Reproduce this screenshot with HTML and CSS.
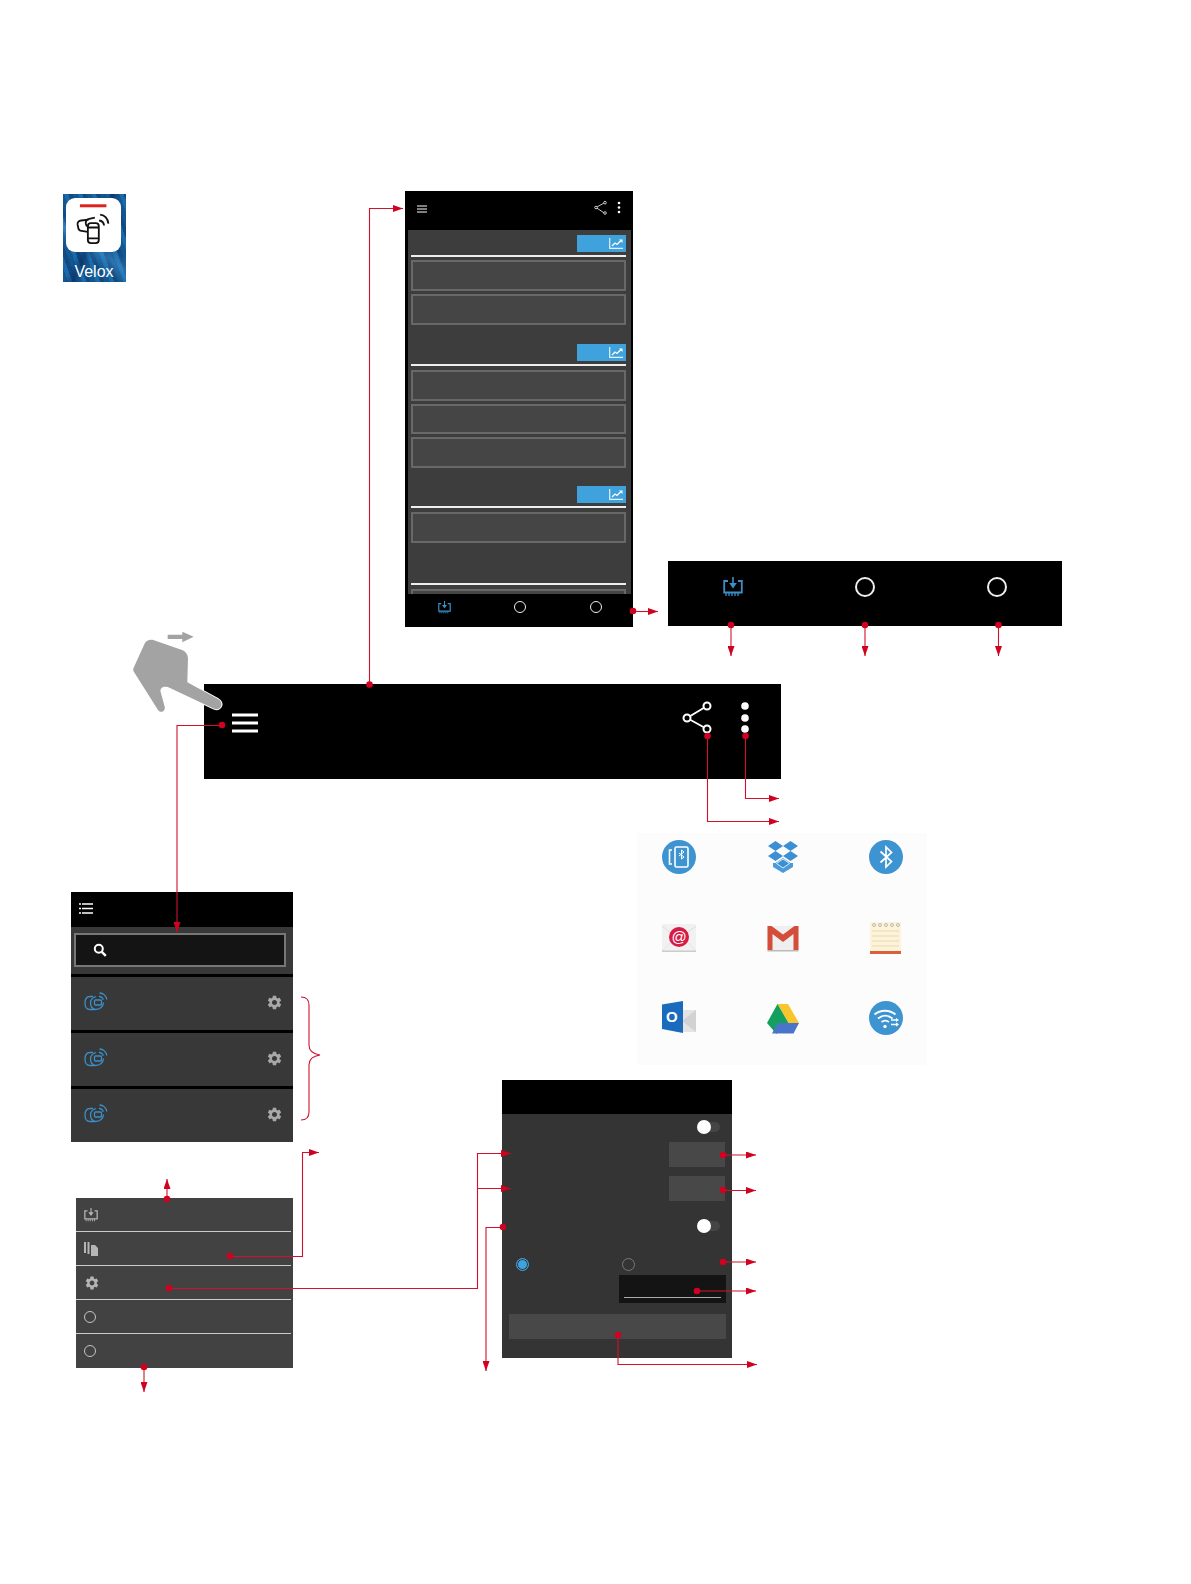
FILE: index.html
```html
<!DOCTYPE html>
<html lang="en">
<head>
  <meta charset="UTF-8" />
  <title>Velox app overview</title>
  <link rel="stylesheet" href="styles.css">
</head>
<body>
  <svg class="sprites" width="0" height="0">
    <symbol id="i-download" viewBox="0 0 20 20">
      <path d="M5 4H1.200v11.500h17.600V4H15" fill="none" stroke="currentColor" stroke-width="1.800"/>
      <path d="M9.200 0h1.600v6h3L10 11.500 6.200 6h3z" fill="currentColor"/>
      <path d="M3 16v3M6 16v3M9 16v3M12 16v3M15 16v3" stroke="currentColor" stroke-width="1.300"/>
    </symbol>
    <symbol id="i-device" viewBox="0 0 24 20">
      <g fill="none" stroke="currentColor" stroke-width="1.300">
        <path d="M9 4.500H6C2.500 4.500 1 7 1 11s1.500 6.500 5 6.500h5c4.500 0 8-2.500 8.500-7"/>
        <path d="M12 4.500C8.500 5.500 6.500 8 6.500 11s1.500 5.500 4.500 6.500"/>
        <rect x="10.500" y="8" width="7" height="5" rx="1"/>
        <path d="M15 4.500c2 0 3.800 1.300 4.200 3.300M15.500 1c3.800 0 6.800 2.800 7.300 6.500"/>
      </g>
    </symbol>
    <symbol id="i-gear" viewBox="0 0 24 24">
      <path fill="currentColor" d="M19.140 12.940c.04-.3.06-.61.06-.94 0-.32-.02-.64-.07-.94l2.030-1.580c.18-.14.23-.41.12-.61l-1.920-3.320c-.12-.22-.37-.29-.59-.22l-2.390.96c-.5-.38-1.030-.7-1.620-.94l-.36-2.540c-.04-.24-.24-.41-.48-.41h-3.840c-.24 0-.43.17-.47.41l-.36 2.540c-.59.24-1.130.57-1.620.94l-2.390-.96c-.22-.08-.47 0-.59.22L2.740 8.870c-.12.21-.08.47.12.61l2.030 1.580c-.05.3-.09.63-.09.94s.02.64.07.94l-2.030 1.580c-.18.14-.23.41-.12.61l1.920 3.320c.12.22.37.29.59.22l2.390-.96c.5.38 1.030.7 1.620.94l.36 2.540c.05.24.24.41.48.41h3.840c.24 0 .44-.17.47-.41l.36-2.540c.59-.24 1.130-.56 1.620-.94l2.390.96c.22.08.47 0 .59-.22l1.920-3.320c.12-.22.07-.47-.12-.61l-2.010-1.580zM12 15.600c-1.980 0-3.600-1.620-3.600-3.600s1.620-3.600 3.600-3.600 3.600 1.620 3.600 3.600-1.620 3.600-3.600 3.600z"/>
    </symbol>
    <symbol id="i-chart" viewBox="0 0 14 11">
      <path d="M.7 0v10.300H14" fill="none" stroke="#fff" stroke-width="1.200" opacity=".85"/>
      <path d="M3 8l3-3 2 1.500L12 2.500" fill="none" stroke="#fff" stroke-width="1.300"/>
      <path d="M10 1.500h3.500V5z" fill="#fff"/>
    </symbol>
  </svg>

  <div class="canvas">
    <!-- launcher icon -->
    <div class="app-icon">
      <div class="app-tile">
        <svg width="55" height="54" viewBox="50 55 166 161">
          <rect x="92" y="73" width="80" height="9" fill="#e0221f"/>
          <g fill="none" stroke="#111" stroke-width="5.500">
            <path d="M118 119l-22 3c-8 1-12 5-11 12l2 10c1 6 5 9 10 9l19 3"/>
            <path d="M137 113l-17 4c-8 2-12 8-10 15l3 8"/>
            <rect x="116" y="130" width="33" height="60" rx="9" fill="#fff"/>
            <path d="M116 143h33M116 176h33"/>
            <path d="M150 122c8 1 14 7 15 15M153 104c14 2 23 12 25 27"/>
          </g>
        </svg>
      </div>
      <div class="app-label">Velox</div>
    </div>

    <!-- main phone screen -->
    <div class="phone">
      <div class="phone-bar">
        <svg class="phone-menu" width="10" height="8" viewBox="0 0 10 8"><path d="M0 1h10M0 4h10M0 7h10" stroke="#fff"/></svg>
        <svg class="phone-actions" width="28" height="14" viewBox="0 0 28 14">
          <g fill="none" stroke="#ddd" stroke-width=".9">
            <path d="M12 1.500L3 6.500l9 6"/>
            <circle cx="12" cy="1.700" r="1.300" fill="#000"/>
            <circle cx="3" cy="6.500" r="1.300" fill="#000"/>
            <circle cx="12" cy="12" r="1.300" fill="#000"/>
          </g>
          <g fill="#fff"><circle cx="26" cy="2" r="1.300"/><circle cx="26" cy="6.500" r="1.300"/><circle cx="26" cy="11" r="1.300"/></g>
        </svg>
      </div>
      <div class="phone-body">
        <div class="section">
          <div class="chart-btn"><svg width="14" height="11"><use href="#i-chart"/></svg></div>
          <div class="rule"></div>
          <div class="field"></div>
          <div class="field"></div>
        </div>
        <div class="section section-mid">
          <div class="chart-btn"><svg width="14" height="11"><use href="#i-chart"/></svg></div>
          <div class="rule"></div>
          <div class="field"></div>
          <div class="field"></div>
          <div class="field"></div>
        </div>
        <div class="section">
          <div class="chart-btn"><svg width="14" height="11"><use href="#i-chart"/></svg></div>
          <div class="rule"></div>
          <div class="field"></div>
        </div>
        <div class="rule rule-end"></div>
        <div class="field"></div>
      </div>
      <div class="phone-nav">
        <svg class="icon-blue" width="13" height="13"><use href="#i-download"/></svg>
        <span class="ring-small"></span>
        <span class="ring-small"></span>
      </div>
    </div>

    <!-- bottom bar, enlarged -->
    <div class="nav-zoom">
      <svg class="icon-blue" width="20" height="20"><use href="#i-download"/></svg>
      <span class="ring-large"></span>
      <span class="ring-large"></span>
    </div>

    <!-- toolbar, enlarged -->
    <div class="toolbar">
      <svg class="toolbar-menu" width="26" height="20" viewBox="0 0 26 20"><path d="M0 2h26M0 10h26M0 18h26" stroke="#fff" stroke-width="3"/></svg>
      <div class="toolbar-actions">
        <svg width="32" height="35" viewBox="0 0 32 35">
          <path d="M26 6L6 18l20 11" fill="none" stroke="#fff" stroke-width="1.800"/>
          <g fill="#000" stroke="#fff" stroke-width="2">
            <circle cx="26" cy="6" r="3.500"/><circle cx="6" cy="18" r="3.500"/><circle cx="26" cy="29" r="3.500"/>
          </g>
        </svg>
        <svg width="8" height="35" viewBox="0 0 8 35">
          <g fill="#fff"><circle cx="4" cy="6" r="3.800"/><circle cx="4" cy="18" r="3.800"/><circle cx="4" cy="29" r="3.800"/></g>
        </svg>
      </div>
    </div>

    <!-- share targets -->
    <div class="share-grid">
      <svg width="34" height="34" viewBox="0 0 34 34">
        <circle cx="17" cy="17" r="17" fill="#3d94d1"/>
        <g fill="none" stroke="#fff" stroke-width="1.600">
          <rect x="13" y="7" width="13" height="20" rx="1.500"/>
          <path d="M10 10H7.500v14H10"/>
          <path d="M17 13l5 4-2.500 2v-9l2.500 2-5 4" stroke-width="1"/>
        </g>
      </svg>
      <svg width="34" height="34" viewBox="0 0 34 34">
        <g fill="#3d8fd3">
          <path d="M9.500 1L17 6 9.500 11 2 6zM24.500 1L32 6l-7.500 5L17 6zM9.500 11L17 16l-7.500 5L2 16zM24.500 11L32 16l-7.500 5L17 16z"/>
          <path d="M7 23l2.500 0 7.500-5 7.500 5 2.500 0v4l-10 6-10-6z" fill="#4c9ad8"/>
          <path d="M10.500 23.500L17 19l6.500 4.500L17 28z" fill="#3d8fd3" stroke="#fff" stroke-width=".8"/>
        </g>
      </svg>
      <svg width="34" height="34" viewBox="0 0 34 34">
        <circle cx="17" cy="17" r="17" fill="#3d94d1"/>
        <path d="M11.500 11.500l11 10L17 27V7l5.500 5.500-11 10" fill="none" stroke="#fff" stroke-width="1.700"/>
      </svg>

      <svg width="34" height="34" viewBox="0 0 34 34">
        <rect x="0" y="3" width="34" height="28" rx="2" fill="#f1f1f1"/>
        <path d="M0 5l17 13L34 5" fill="none" stroke="#ddd"/>
        <path d="M0 30l12-12M34 30L22 18" fill="none" stroke="#e4e4e4"/>
        <rect x="0" y="29.500" width="34" height="1.500" fill="#ccc"/>
        <circle cx="17" cy="16" r="10" fill="#d81b45"/>
        <text class="mail-at" x="17" y="21" text-anchor="middle">@</text>
      </svg>
      <svg width="34" height="34" viewBox="0 0 34 34">
        <rect x="1.500" y="5" width="31" height="25" fill="#efefef"/>
        <path d="M1.500 5h4L17 13.500 28.500 5h4v24h-5V13L17 21 6.500 13v16h-5z" fill="#d44c3a"/>
        <rect x="1.500" y="29" width="31" height="1.500" fill="#bbb"/>
      </svg>
      <svg width="34" height="34" viewBox="0 0 34 34">
        <rect x="1" y="1" width="31" height="30" fill="#fdf3da"/>
        <path d="M3 10h27M3 15h27M3 20h27M3 25h27" stroke="#e8d9b4"/>
        <rect x="1" y="30" width="31" height="3" fill="#d9603a"/>
        <g fill="none" stroke="#aaa" stroke-width=".8">
          <circle cx="5" cy="4" r="1.500"/><circle cx="11" cy="4" r="1.500"/><circle cx="17" cy="4" r="1.500"/><circle cx="23" cy="4" r="1.500"/><circle cx="29" cy="4" r="1.500"/>
        </g>
      </svg>

      <svg width="34" height="34" viewBox="0 0 34 34">
        <path d="M13 9h21v22H13z" fill="#e4e4e4"/>
        <path d="M20 20L34 9v22z" fill="#d2d2d2"/>
        <path d="M0 3.500L21 0v32L0 28z" fill="#1a6bbd"/>
        <text class="outlook-o" x="4" y="21">O</text>
      </svg>
      <svg class="drive" width="34" height="34" viewBox="0 0 34 34">
        <path d="M11.500 1h10.500L33 20H22.500z" fill="#f8c52c"/>
        <path d="M11.500 1L22.500 20l-5.500 0-6.500 11L1 20z" fill="#12a05c"/>
        <path d="M11.500 20H33l-5.500 10.500H6z" fill="#4a74c9"/>
      </svg>
      <svg width="34" height="34" viewBox="0 0 34 34">
        <circle cx="17" cy="17" r="17" fill="#3d94d1"/>
        <g fill="none" stroke="#fff" stroke-width="1.800">
          <path d="M5.500 13.500c6-5 15-5 21 0M9 17.500c4.500-3.500 10-3.500 14.500 0M12.500 21c2.500-1.800 5-1.800 7.500 0"/>
        </g>
        <circle cx="16" cy="25.500" r="1.700" fill="#fff"/>
        <path d="M22 19h6.500M22 23.500h7" stroke="#fff" stroke-width="1.500"/>
        <path d="M27 17l3 2-3 2zM27 21.500l3 2-3 2z" fill="#fff"/>
      </svg>
    </div>

    <!-- device list -->
    <div class="sidebar">
      <div class="sidebar-head">
        <svg width="14" height="11" viewBox="0 0 14 11"><path d="M3 1h11M3 5.500h11M3 10h11" stroke="#fff" stroke-width="1.600"/><path d="M0 1h2M0 5.500h2M0 10h2" stroke="#fff" stroke-width="1.600"/></svg>
      </div>
      <div class="search-area">
        <div class="search-box">
          <svg width="14" height="14" viewBox="0 0 14 14"><circle cx="5.800" cy="5.800" r="4" fill="none" stroke="#fff" stroke-width="2"/><path d="M8.800 8.800l4 4" stroke="#fff" stroke-width="2.400"/></svg>
        </div>
      </div>
      <div class="device-row">
        <svg class="icon-blue" width="24" height="20"><use href="#i-device"/></svg>
        <svg class="icon-gear" width="17" height="17"><use href="#i-gear"/></svg>
      </div>
      <div class="device-row">
        <svg class="icon-blue" width="24" height="20"><use href="#i-device"/></svg>
        <svg class="icon-gear" width="17" height="17"><use href="#i-gear"/></svg>
      </div>
      <div class="device-row">
        <svg class="icon-blue" width="24" height="20"><use href="#i-device"/></svg>
        <svg class="icon-gear" width="17" height="17"><use href="#i-gear"/></svg>
      </div>
    </div>

    <!-- drawer menu -->
    <div class="menu">
      <div class="menu-row"><svg class="icon-grey" width="14" height="14"><use href="#i-download"/></svg></div>
      <div class="menu-row">
        <svg class="icon-grey" width="14" height="14" viewBox="0 0 14 14"><path d="M0 0h2v11H0zM3.500 0h2v12h-2zM7 3h4l3 3v8H7z" fill="currentColor"/></svg>
      </div>
      <div class="menu-row"><svg class="icon-grey" width="16" height="16"><use href="#i-gear"/></svg></div>
      <div class="menu-row"><span class="ring-menu"></span></div>
      <div class="menu-row"><span class="ring-menu"></span></div>
    </div>

    <!-- device settings -->
    <div class="settings">
      <div class="settings-head"></div>
      <div class="settings-body">
        <div class="toggle"><span class="knob"></span></div>
        <div class="value-btn"></div>
        <div class="value-btn value-btn-next"></div>
        <div class="toggle toggle-next"><span class="knob"></span></div>
        <div class="radio-row">
          <span class="radio radio-on"></span>
          <span class="radio"></span>
        </div>
        <div class="text-input"><div class="text-line"></div></div>
        <div class="wide-btn"></div>
      </div>
    </div>

    <!-- callout lines, hand gesture -->
    <svg class="callouts" width="1191" height="1584" viewBox="0 0 1191 1584">
      <defs>
        <marker id="head" viewBox="0 0 10 7" refX="10" refY="3.500" markerWidth="10" markerHeight="7" markerUnits="userSpaceOnUse" orient="auto">
          <path d="M0 0l10 3.500-10 3.500z" fill="#d0021f"/>
        </marker>
      </defs>

      <g transform="translate(120 618) scale(.3333)">
        <path d="M143 50h44V41l34 15-34 17V63h-44z" fill="#a3a3a3"/>
        <path d="M82 68c6-3 14-3 20-1l82 28c12 4 20 14 20 26l-2 72 92 50c8 5 12 12 10 20-3 9-12 13-22 9L150 210c-12-7-32-4-28 12l12 44c3 12-10 22-20 10L42 162c-3-5-3-8-1-13l32-70c2-5 5-9 9-11z" fill="#a3a3a3" stroke="#fff" stroke-width="6" paint-order="stroke"/>
      </g>

      <g fill="none" stroke="#d0122e" stroke-width="1.100">
        <path d="M369.500 684V208.500H403" marker-end="url(#head)"/>
        <path d="M633 611.500H658" marker-end="url(#head)"/>
        <path d="M731 625V656" marker-end="url(#head)"/>
        <path d="M865 625V656" marker-end="url(#head)"/>
        <path d="M998.500 625V656" marker-end="url(#head)"/>
        <path d="M745.500 736V798.500H779" marker-end="url(#head)"/>
        <path d="M707.500 736V821.500H779" marker-end="url(#head)"/>
        <path d="M222 725.500H177V932" marker-end="url(#head)"/>
        <path d="M301 997c5 0 8 2 8 8V1045c0 6 4 9 11 10-7 1-11 4-11 10V1112c0 6-3 8-8 8"/>
        <path d="M167 1199V1179" marker-end="url(#head)"/>
        <path d="M144 1367V1392" marker-end="url(#head)"/>
        <path d="M230 1256.500H302.500V1152.500H319" marker-end="url(#head)"/>
        <path d="M169 1288.500H477.500V1153.500H511" marker-end="url(#head)"/>
        <path d="M477.500 1188.500H511" marker-end="url(#head)"/>
        <path d="M503 1227.500H486V1371" marker-end="url(#head)"/>
        <path d="M723 1155H756" marker-end="url(#head)"/>
        <path d="M723 1190.500H756" marker-end="url(#head)"/>
        <path d="M723 1262H756" marker-end="url(#head)"/>
        <path d="M697 1291H756" marker-end="url(#head)"/>
        <path d="M618 1335V1364.500H757" marker-end="url(#head)"/>
      </g>

      <g fill="#d0021f">
        <circle cx="369.500" cy="684.500" r="3.300"/>
        <circle cx="633" cy="611" r="3.300"/>
        <circle cx="731" cy="625" r="3.300"/>
        <circle cx="865" cy="625" r="3.300"/>
        <circle cx="998.500" cy="625" r="3.300"/>
        <circle cx="707.500" cy="736" r="3.300"/>
        <circle cx="745.500" cy="736" r="3.300"/>
        <circle cx="222" cy="725" r="3.300"/>
        <circle cx="167" cy="1199" r="3.300"/>
        <circle cx="144" cy="1367" r="3.300"/>
        <circle cx="230" cy="1256" r="3.300"/>
        <circle cx="169" cy="1288" r="3.300"/>
        <circle cx="503" cy="1227" r="3.300"/>
        <circle cx="723" cy="1155" r="3.300"/>
        <circle cx="723" cy="1190" r="3.300"/>
        <circle cx="723" cy="1262" r="3.300"/>
        <circle cx="697" cy="1291" r="3.300"/>
        <circle cx="618" cy="1335" r="3.300"/>
      </g>
    </svg>
  </div>
</body>
</html>
```
FILE: styles.css
```css
body {
  margin: 0;
  background: #fff;
  font-family: "Liberation Sans", sans-serif;
}
.sprites {
  position: absolute;
}
/* The page is one annotated diagram, so each screen sits on a free canvas */
.canvas {
  position: relative;
  width: 1191px;
  height: 1584px;
  overflow: hidden;
}
.callouts {
  position: absolute;
  left: 0;
  top: 0;
  pointer-events: none;
}
.icon-blue {
  color: #3b8fc9;
}
.icon-gear {
  color: #a8a8a8;
}
.icon-grey {
  color: #b5b5b5;
}

/* launcher icon */
.app-icon {
  position: absolute;
  left: 63px;
  top: 194px;
  width: 63px;
  height: 88px;
  box-sizing: border-box;
  padding: 4px 4px 0 3px;
  background:
    linear-gradient(115deg, transparent 40%, rgba(8, 40, 90, .5) 48%, transparent 56%),
    linear-gradient(35deg, transparent 30%, rgba(90, 170, 230, .35) 42%, transparent 52%),
    repeating-linear-gradient(70deg, #14568f 0 5px, #1a6aab 5px 9px, #114a80 9px 13px);
}
.app-tile {
  width: 55px;
  height: 54px;
  background: #fff;
  border-radius: 9px;
}
.app-label {
  margin-top: 11px;
  color: #fff;
  font-size: 16px;
  line-height: 18px;
  text-align: center;
}

/* phone */
.phone {
  position: absolute;
  left: 405px;
  top: 191px;
  width: 228px;
  height: 436px;
  background: #000;
}
.phone-bar {
  display: flex;
  justify-content: space-between;
  align-items: flex-start;
  height: 39px;
  padding: 0 12px 0 12px;
}
.phone-menu {
  margin-top: 14px;
}
.phone-actions {
  margin-top: 10px;
}
.phone-body {
  height: 364px;
  margin: 0 2px 0 3px;
  padding: 5px 5.500px 0 3px;
  background: #3d3d3d;
  overflow: hidden;
  box-sizing: border-box;
}
.section {
  margin-bottom: 19px;
}
.section-mid {
  margin-bottom: 18.500px;
}
.chart-btn {
  display: flex;
  justify-content: flex-end;
  align-items: center;
  width: 48.500px;
  height: 17px;
  margin: 0 0 0 auto;
  padding-right: 3px;
  box-sizing: border-box;
  background: #3fa2dd;
}
.rule {
  height: 2px;
  margin-top: 3px;
  background: #eee;
}
.rule-end {
  margin-top: 40px;
}
.field {
  height: 31px;
  margin-top: 3px;
  box-sizing: border-box;
  background: #454545;
  border: 2px solid #686868;
}
.section + .section .field {
  height: 30.500px;
}
.section + .section .rule + .field,
.rule-end + .field {
  margin-top: 4px;
}
.phone-nav {
  display: grid;
  grid-template-columns: repeat(3, 76px);
  justify-items: center;
  padding: 7px 0 0 1px;
}
.ring-small {
  width: 10px;
  height: 10px;
  border: 1px solid #eee;
  border-radius: 50%;
}

/* bottom bar zoom */
.nav-zoom {
  position: absolute;
  left: 668px;
  top: 561px;
  width: 394px;
  height: 65px;
  box-sizing: border-box;
  display: grid;
  grid-template-columns: 130.500px 132.400px 133px;
  justify-items: center;
  padding-top: 16px;
  background: #000;
}
.ring-large {
  width: 16px;
  height: 16px;
  border: 2px solid #eee;
  border-radius: 50%;
}

/* toolbar zoom */
.toolbar {
  position: absolute;
  left: 204px;
  top: 684px;
  width: 577px;
  height: 95px;
  box-sizing: border-box;
  padding: 16px 32px 0 28px;
  display: flex;
  justify-content: space-between;
  align-items: flex-start;
  background: #000;
}
.toolbar-menu {
  margin-top: 13px;
}
.toolbar-actions {
  display: flex;
  gap: 28px;
}

/* share targets */
.share-grid {
  position: absolute;
  left: 637px;
  top: 833px;
  width: 290px;
  height: 232px;
  box-sizing: border-box;
  padding: 7px 0 0 25px;
  display: grid;
  grid-template-columns: repeat(3, 103.500px);
  grid-auto-rows: 80.500px;
  background: #fcfcfc;
}
.drive {
  margin-top: 2px;
}
.outlook-o {
  font-family: "Liberation Sans", sans-serif;
  font-size: 15px;
  font-weight: bold;
  fill: #fff;
}
.mail-at {
  font-family: "Liberation Sans", sans-serif;
  font-size: 15px;
  fill: #fff;
}

/* device list */
.sidebar {
  position: absolute;
  left: 71px;
  top: 892px;
  width: 222px;
  background: #000;
}
.sidebar-head {
  display: flex;
  align-items: center;
  height: 35px;
  padding: 0 0 2px 8px;
  box-sizing: border-box;
}
.search-area {
  height: 47px;
  padding: 6px 7px 0 3px;
  box-sizing: border-box;
  background: #383838;
}
.search-box {
  display: flex;
  align-items: center;
  height: 34px;
  box-sizing: border-box;
  padding: 0 0 1px 17px;
  background: #141414;
  border: 2px solid #777;
}
.device-row {
  display: flex;
  justify-content: space-between;
  align-items: center;
  height: 53px;
  margin-top: 3px;
  padding: 0 10px 3px 13px;
  box-sizing: border-box;
  background: #383838;
}

/* drawer menu */
.menu {
  position: absolute;
  left: 76px;
  top: 1198px;
  width: 217px;
  height: 170px;
  background: #424242;
}
.menu-row {
  display: flex;
  align-items: center;
  height: 34px;
  margin-right: 2px;
  padding-left: 8px;
  box-sizing: border-box;
  border-bottom: 1px solid #ccc;
}
.menu-row:last-child {
  border-bottom: 0;
}
.ring-menu {
  width: 10px;
  height: 10px;
  border: 1.500px solid #c4c4c4;
  border-radius: 50%;
}

/* settings */
.settings {
  position: absolute;
  left: 502px;
  top: 1080px;
  width: 230px;
  height: 278px;
  background: #343434;
}
.settings-head {
  height: 34px;
  background: #000;
}
.settings-body {
  padding-top: 6px;
}
.toggle {
  display: flex;
  align-items: center;
  width: 23px;
  height: 10px;
  margin: 2px 12px 0 auto;
  border-radius: 5px;
  background: #454545;
}
.toggle-next {
  margin-top: 20px;
}
.knob {
  flex: none;
  width: 14px;
  height: 14px;
  border-radius: 50%;
  background: #fff;
}
.value-btn {
  width: 56px;
  height: 25px;
  margin: 10px 7px 0 auto;
  background: #484848;
}
.value-btn-next {
  margin-top: 9px;
}
.radio-row {
  display: flex;
  gap: 93px;
  margin-top: 27px;
  padding-left: 14px;
}
.radio {
  width: 11px;
  height: 11px;
  border: 1px solid #777;
  border-radius: 50%;
}
.radio-on {
  background: #3fa2dd;
  border-color: #3fa2dd;
  box-shadow: inset 0 0 0 1px #343434;
}
.text-input {
  width: 107px;
  height: 28px;
  margin: 4px 6px 0 auto;
  padding: 22px 5px 0;
  box-sizing: border-box;
  background: #141414;
}
.text-line {
  height: 1px;
  background: #aaa;
}
.wide-btn {
  height: 25px;
  margin: 11px 6px 0 7px;
  background: #484848;
}
```
